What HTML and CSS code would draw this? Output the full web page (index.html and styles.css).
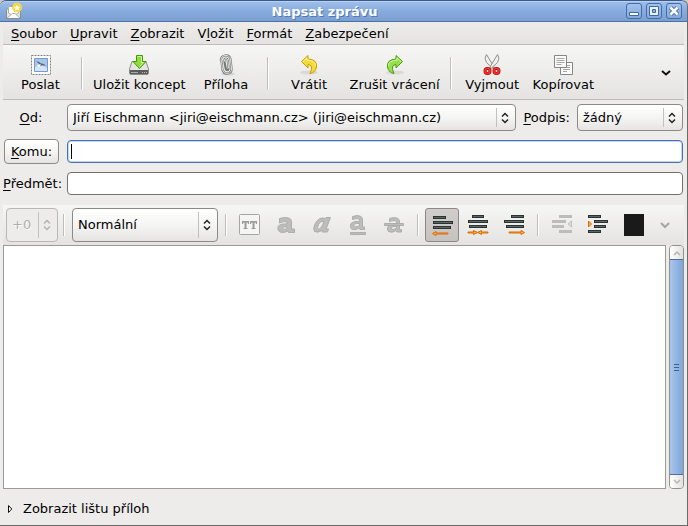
FILE: index.html
```html
<!DOCTYPE html>
<html lang="cs">
<head>
<meta charset="utf-8">
<title>Napsat zprávu</title>
<link rel="stylesheet" href="styles.css">
</head>
<body>
<div class="window">
  <header class="titlebar">
    <svg class="app-icon" width="18" height="18" viewBox="0 0 18 18" aria-hidden="true">
      <path d="M1.500 7.500 L9 2.500 L15.500 7.500 V16.500 H1.500 Z" fill="#e6e6e2" stroke="#8d8d87"/>
      <path d="M3.500 4.500 H13.500 V11 L8.500 14 L3.500 11 Z" fill="#fff" stroke="#b0b0aa"/>
      <path d="M2 16 L7.500 11.500 H10 L15 16" fill="#f8f8f6" stroke="#b5b5af"/>
      <circle cx="12" cy="5.500" r="5" fill="#f6e04a" opacity=".9"/>
      <path d="M12 1.500 L13.300 4.200 L16.300 4.500 L14.100 6.500 L14.800 9.500 L12 8 L9.200 9.500 L9.900 6.500 L7.700 4.500 L10.700 4.200 Z" fill="#fffef0" stroke="#e5c800" stroke-width=".6"/>
    </svg>
    <h1 class="title">Napsat zprávu</h1>
    <div class="window-controls">
      <button class="window-button" type="button" aria-label="Minimalizovat"><svg width="14" height="14" viewBox="0 0 14 14"><path d="M2.500 8.500 H11.500 V11.500 H2.500 Z" fill="#fff" stroke="#3f6ba5"/></svg></button>
      <button class="window-button" type="button" aria-label="Maximalizovat"><svg width="14" height="14" viewBox="0 0 14 14"><path d="M2.500 2.500 H11.500 V11.500 H2.500 Z" fill="#e9f1fb" stroke="#3f6ba5"/><path d="M5.500 5.500 H8.500 V8.500 H5.500 Z" fill="#8fb1df" stroke="#3f6ba5"/></svg></button>
      <button class="window-button" type="button" aria-label="Zavřít"><svg width="14" height="14" viewBox="0 0 14 14"><path d="M3.500 3.500 L10.500 10.500 M10.500 3.500 L3.500 10.500" stroke="#3f6ba5" stroke-width="4.500"/><path d="M3.500 3.500 L10.500 10.500 M10.500 3.500 L3.500 10.500" stroke="#fff" stroke-width="2.500"/></svg></button>
    </div>
  </header>

  <nav class="menubar" aria-label="Hlavní nabídka">
    <button type="button"><u>S</u>oubor</button>
    <button type="button"><u>U</u>pravit</button>
    <button type="button"><u>Z</u>obrazit</button>
    <button type="button">V<u>l</u>ožit</button>
    <button type="button"><u>F</u>ormát</button>
    <button type="button"><u>Z</u>abezpečení</button>
  </nav>

  <div class="toolbar" role="toolbar" aria-label="Zpráva">
    <button class="tool" type="button">
      <svg width="24" height="24" viewBox="0 0 24 24" aria-hidden="true">
        <path d="M2.500 2.500 H21.500 V21.500 H2.500 Z" fill="#fafaf8" stroke="#85857f" stroke-dasharray="2 1"/>
        <path d="M5.500 5.500 H18.500 V18.500 H5.500 Z" fill="#a9c6e8" stroke="#6f9bd0"/>
        <path d="M6 14 Q12 11 18 15 V18 H6 Z" fill="#d5e5f5"/>
        <path d="M7 8.500 Q10 8 12 10.500 Q14 10 17 12.500 Q13 12 11 12.500 Q10 10 7 8.500 Z" fill="#54636e"/>
        <path d="M8 12 L12 11 L10 14 Z" fill="#fff"/>
      </svg>
      <span>Poslat</span>
    </button>
    <span class="separator"></span>
    <button class="tool" type="button">
      <svg width="24" height="24" viewBox="0 0 24 24" aria-hidden="true">
        <path d="M5 8.500 H19 L21.500 16 V20 Q21.500 21.500 20 21.500 H4 Q2.500 21.500 2.500 20 V16 Z" fill="#e4e4e0" stroke="#8c8c88"/>
        <path d="M3 17 H21 V21 H3 Z" fill="#5a5d5c"/>
        <path d="M4 19.500 H11" stroke="#a9aba8"/><path d="M15 19.500 H20" stroke="#b9bbb8" stroke-dasharray="1 1"/>
        <path d="M9.500 2.500 H15.500 V8.500 H19 L12.500 15.500 L6 8.500 H9.500 Z" fill="#8fdc3c" stroke="#3f9a08"/>
        <path d="M10.500 3.500 H14.500 V9.500 H16.500 L12.500 13.700" fill="none" stroke="#d1f3a6"/>
      </svg>
      <span>Uložit koncept</span>
    </button>
    <button class="tool" type="button">
      <svg width="24" height="24" viewBox="0 0 24 24" aria-hidden="true">
        <ellipse cx="14" cy="21" rx="7" ry="1.500" fill="#d2d2cf"/>
        <g fill="none" stroke-linecap="round">
          <path d="M7.500 8 L8.500 17 Q10 21 13.500 20.500 Q18 20 17.500 15 L16.500 6 Q15.500 2 11 2.500 Q6.500 3 7 8 M10.500 8 Q10 5.500 12 5.500 Q13.500 5.500 13.800 8 L14.500 15 Q14.500 17.500 13 17 Q12 17 11.500 14.500 L10.500 9" stroke="#777a74" stroke-width="2.200"/>
          <path d="M7.500 8 L8.500 17 Q10 21 13.500 20.500 Q18 20 17.500 15 L16.500 6 Q15.500 2 11 2.500 Q6.500 3 7 8 M10.500 8 Q10 5.500 12 5.500 Q13.500 5.500 13.800 8 L14.500 15" stroke="#dcdeda"/>
        </g>
      </svg>
      <span>Příloha</span>
    </button>
    <span class="separator"></span>
    <button class="tool" type="button">
      <svg width="24" height="24" viewBox="0 0 24 24" aria-hidden="true">
        <ellipse cx="12" cy="19.500" rx="9" ry="2" fill="#d9d9d6"/>
        <path d="M4.500 8.500 L11 2.500 V6 Q20.500 6.500 19.500 14 Q18.500 19.500 13 20.500 Q17 12 11 11.500 V15 Z" fill="#f6d936" stroke="#c4a000" stroke-linejoin="round"/>
        <path d="M6 8.500 L10 4.800 V7 Q18.500 7.500 18.500 13" fill="none" stroke="#fff3a6"/>
      </svg>
      <span>Vrátit</span>
    </button>
    <button class="tool" type="button">
      <svg width="24" height="24" viewBox="0 0 24 24" aria-hidden="true">
        <ellipse cx="12" cy="19.500" rx="9" ry="2" fill="#d9d9d6"/>
        <path d="M19.500 8.500 L13 2.500 V6 Q3.500 6.500 4.500 14 Q5.500 19.500 11 20.500 Q7 12 13 11.500 V15 Z" fill="#93e04a" stroke="#4a9a12" stroke-linejoin="round"/>
        <path d="M18 8.500 L14 4.800 V7 Q5.500 7.500 5.500 13" fill="none" stroke="#d4f5aa"/>
      </svg>
      <span>Zrušit vrácení</span>
    </button>
    <span class="separator"></span>
    <button class="tool" type="button">
      <svg width="24" height="24" viewBox="0 0 24 24" aria-hidden="true">
        <path d="M6.500 1.500 Q3.500 5 6.500 9.500 L13 15.500 L14 14 Z" fill="#f1f1ef" stroke="#8f918c"/>
        <path d="M17.500 1.500 Q20.500 5 17.500 9.500 L11 15.500 L10 14 Z" fill="#f1f1ef" stroke="#8f918c"/>
        <g fill="#f5eeee" stroke="#b80808" stroke-width="3"><circle cx="7.500" cy="18" r="2.500"/><circle cx="16.500" cy="18" r="2.500"/></g>
        <g fill="none" stroke="#ef3434" stroke-width="1.500"><circle cx="7.500" cy="18" r="2.500"/><circle cx="16.500" cy="18" r="2.500"/></g>
      </svg>
      <span>Vyjmout</span>
    </button>
    <button class="tool" type="button">
      <svg width="24" height="24" viewBox="0 0 24 24" aria-hidden="true">
        <path d="M9.500 9.500 H21.500 V21.500 H9.500 Z" fill="#fafaf9" stroke="#858783"/>
        <path d="M12 12.500 H19 M12 14.500 H19 M12 16.500 H19 M12 18.500 H16" stroke="#a6a8a4"/>
        <path d="M3.500 2.500 H15.500 V14.500 H3.500 Z" fill="#fafaf9" stroke="#858783"/>
        <path d="M5.500 5.500 H13.500 M5.500 7.500 H13.500 M5.500 9.500 H13.500 M5.500 11.500 H10.500" stroke="#a6a8a4"/>
      </svg>
      <span>Kopírovat</span>
    </button>
    <button class="overflow" type="button" aria-label="Další nástroje"><svg width="12" height="8" viewBox="0 0 12 8"><path d="M2 2 L6 5.500 L10 2" fill="none" stroke="#111" stroke-width="2"/></svg></button>
  </div>

  <form class="fields">
    <label class="field-label centered" for="from"><u>O</u>d:</label>
    <div class="from-row">
      <div class="combo grow">
        <select id="from"><option>Jiří Eischmann &lt;jiri@eischmann.cz&gt; (jiri@eischmann.cz)</option></select>
        <svg class="arrows" width="10" height="12" viewBox="0 0 10 12" aria-hidden="true"><path d="M2 4.500 L5 1.500 L8 4.500 M2 7.500 L5 10.500 L8 7.500"/></svg>
      </div>
      <label for="signature"><u>P</u>odpis:</label>
      <div class="combo signature">
        <select id="signature"><option>žádný</option></select>
        <svg class="arrows" width="10" height="12" viewBox="0 0 10 12" aria-hidden="true"><path d="M2 4.500 L5 1.500 L8 4.500 M2 7.500 L5 10.500 L8 7.500"/></svg>
      </div>
    </div>
    <button class="to-button" type="button" id="to-label"><u>K</u>omu:</button>
    <div class="active-entry">
      <input class="entry active" type="text" aria-labelledby="to-label">
      <span class="caret"></span>
    </div>
    <label class="field-label" for="subject"><u>P</u>ředmět:</label>
    <input class="entry" type="text" id="subject">
  </form>

  <div class="formatbar" role="toolbar" aria-label="Formátování">
    <div class="combo tall size">
      <select aria-label="Velikost písma" disabled><option>+0</option></select>
      <svg class="arrows" width="10" height="12" viewBox="0 0 10 12" aria-hidden="true"><path d="M2 4.500 L5 1.500 L8 4.500 M2 7.500 L5 10.500 L8 7.500"/></svg>
    </div>
    <span class="separator"></span>
    <div class="combo tall style">
      <select aria-label="Styl odstavce"><option>Normální</option></select>
      <svg class="arrows" width="10" height="12" viewBox="0 0 10 12" aria-hidden="true"><path d="M2 4.500 L5 1.500 L8 4.500 M2 7.500 L5 10.500 L8 7.500"/></svg>
    </div>
    <span class="separator"></span>
    <button class="format" type="button" aria-label="Neproporcionální" disabled><svg width="24" height="24" viewBox="0 0 24 24"><rect x="1.500" y="1.500" width="20" height="20" rx="1" fill="#f5f5f4" stroke="#a5a5a2"/><path d="M4 8 H11 V11 H10 L9.500 9.500 H8.500 V15 H9.500 V16 H5.500 V15 H6.500 V9.500 H5.500 L5 11 H4 Z M12 8 H19 V11 H18 L17.500 9.500 H16.500 V15 H17.500 V16 H13.500 V15 H14.500 V9.500 H13.500 L13 11 H12 Z" fill="#9b9b98"/></svg></button>
    <button class="format" type="button" aria-label="Tučné" disabled><svg class="glyph" width="24" height="24" viewBox="0 0 24 24"><path d="M5.500 5.500 Q12 3.500 16 5.500 Q17.500 7 17.500 9 V16 H20.500 V19.500 H14.500 L13.500 18 Q10 20.500 6 19 Q3 17 4 13.500 Q6 10.500 13 11 V9.500 Q11 7.500 5.500 10 Z M13 13.500 Q8.500 13.500 8.500 15.500 Q9.500 17.500 13 15.500 Z"/></svg></button>
    <button class="format" type="button" aria-label="Kurzíva" disabled><svg class="glyph" width="24" height="24" viewBox="0 0 24 24"><path d="M20.500 4.500 L16 16 H18.500 L17.500 19 H12 L12.500 17 Q8 20.500 4.500 18.500 Q2.500 15 5.500 10 Q9.500 3.500 15 5.500 L16 4.500 Z M14 8 Q10.500 7.500 8.500 11.500 Q6.500 15.500 8.500 16.500 Q11.500 16 14 8 Z"/></svg></button>
    <button class="format" type="button" aria-label="Podtržené" disabled><svg class="glyph" width="24" height="24" viewBox="0 0 24 24"><path d="M6.500 3.500 Q12 1.500 15 3.500 Q16.500 4.500 16.500 7 V14 H18.500 V16.500 H14 L13 15 Q9 18 5.500 16 Q3.500 13.500 5 10.500 Q8 7.500 13.500 8.500 V7 Q12.500 4.500 6.500 6.500 Z M13.500 10.500 Q8 10 8 12.500 Q9 15 13.500 12.500 Z M4.500 19.500 H19.500 V21.500 H4.500 Z"/></svg></button>
    <button class="format" type="button" aria-label="Přeškrtnuté" disabled><svg class="glyph" width="24" height="24" viewBox="0 0 24 24"><path d="M7.500 5.500 Q13 3.500 16 5.500 Q17.500 6.500 17.500 9 V16.500 H19.500 V19 H15 L14 17.500 Q10 20.500 6.500 18.500 Q4.500 16.500 6 13.500 Q9 10.500 14.500 11 V9 Q13.500 6.500 7.500 8.500 Z M14.500 13.500 Q9 13 9 15.500 Q10 17.500 14.500 15.500 Z"/><path d="M2.500 10.500 H21.500 V12.500 H2.500 Z"/></svg></button>
    <span class="separator"></span>
    <button class="format pressed" type="button" aria-label="Zarovnat vlevo" aria-pressed="true"><svg width="24" height="24" viewBox="0 0 24 24"><path class="lines" d="M3 4.500 H16 M3 9.500 H23 M3 14.500 H21"/><path class="core" d="M4 4.500 H15 M4 9.500 H22 M4 14.500 H20"/><path class="arrow" d="M2.500 20.500 L6 18.500 V20 H18 V21 H6 V22.500 Z"/></svg></button>
    <button class="format" type="button" aria-label="Zarovnat na střed"><svg width="24" height="24" viewBox="0 0 24 24"><path class="lines" d="M6 3.500 H18 M2 8.500 H22 M3 13.500 H21"/><path class="core" d="M7 3.500 H17 M3 8.500 H21 M4 13.500 H20"/><path class="arrow" d="M2 19 H7.500 V17.500 L11.500 19.500 L15.500 17.500 V19 H22 V20 H15.500 V21.500 L11.500 19.500 L7.500 21.500 V20 H2 Z"/></svg></button>
    <button class="format" type="button" aria-label="Zarovnat vpravo"><svg width="24" height="24" viewBox="0 0 24 24"><path class="lines" d="M9 3.500 H22 M2 8.500 H22 M4 13.500 H22"/><path class="core" d="M10 3.500 H21 M3 8.500 H21 M5 13.500 H21"/><path class="arrow" d="M22.500 19.500 L19 17.500 V19 H7 V20 H19 V21.500 Z"/></svg></button>
    <span class="separator"></span>
    <button class="format" type="button" aria-label="Zmenšit odsazení" disabled><svg width="24" height="24" viewBox="0 0 24 24"><path class="lines faded" d="M9 3.500 H22 M2 8.500 H16 M2 13.500 H14 M9 18.500 H22"/><path d="M21.500 8 V14 L18 11 Z" fill="#e3e3e0" stroke="#bdbdba"/></svg></button>
    <button class="format" type="button" aria-label="Zvětšit odsazení"><svg width="24" height="24" viewBox="0 0 24 24"><path class="lines" d="M2 3.500 H15 M8 8.500 H22 M8 13.500 H20 M2 18.500 H15"/><path class="core" d="M3 3.500 H14 M9 8.500 H21 M9 13.500 H19 M3 18.500 H14"/><path class="arrow" d="M2.500 8 V14 L5.500 11 Z"/></svg></button>
    <button class="format" type="button" aria-label="Barva písma"><span class="swatch"></span></button>
    <button class="overflow dim" type="button" aria-label="Paleta barev"><svg width="12" height="8" viewBox="0 0 12 8"><path d="M2 2 L6 6 L10 2" fill="none" stroke="#a5a5a2" stroke-width="2"/></svg></button>
  </div>

  <main class="editor">
    <textarea class="message" aria-label="Text zprávy"></textarea>
    <div class="scrollbar">
      <button class="scroll-step" type="button" aria-label="Nahoru"><svg width="10" height="6" viewBox="0 0 10 6"><path d="M2 5 L5 2 L8 5"/></svg></button>
      <div class="thumb"><span></span><span></span><span></span></div>
      <button class="scroll-step" type="button" aria-label="Dolů"><svg width="10" height="6" viewBox="0 0 10 6"><path d="M2 1 L5 4 L8 1"/></svg></button>
    </div>
  </main>

  <footer class="attachments">
    <button type="button"><svg width="6" height="8" viewBox="0 0 6 8" aria-hidden="true"><path d="M1.500 .5 V7.500 L4.800 4 Z" fill="#fff" stroke="#111"/></svg>Zobrazit lištu příloh</button>
  </footer>
</div>
</body>
</html>
```

FILE: styles.css
```css
* { box-sizing: border-box; }

body {
  margin: 0;
  background: #ccc8c0;
  color: #000;
  font: 13px/16px "DejaVu Sans", sans-serif;
}

button, input, select, textarea { font: inherit; color: inherit; margin: 0; }
button { border: 0; background: none; padding: 0; white-space: nowrap; }
svg { display: block; flex: none; }
u { text-decoration-thickness: 1px; text-underline-offset: 2px; }

.window {
  display: flex;
  flex-direction: column;
  min-height: 100vh;
  padding: 0 3px;
  background: #edeceb;
  border-right: 1px solid #6b6b69;
  border-bottom: 1px solid #6b6b69;
  border-radius: 6px 6px 0 0;
}

/* Title bar */
.titlebar {
  display: flex;
  align-items: center;
  height: 22px;
  margin: 0 -3px;
  padding: 0 5px;
  background: linear-gradient(#a1c0eb, #86abdd 50%, #7a9fd0);
  border-top: 1px solid #3c5a85;
  border-bottom: 1px solid #4a72a9;
  border-radius: 6px 6px 0 0;
  box-shadow: inset 0 1px #b8d0f2;
}
.title {
  flex: 1;
  margin: 0;
  padding-top: 1px;
  color: #fff;
  font-size: 13px;
  font-weight: bold;
  text-align: center;
  text-shadow: 1px 1px #5079b2;
}
.window-controls { display: flex; gap: 4px; }
.window-button {
  display: grid;
  place-items: center;
  width: 16px;
  height: 16px;
  border: 1px solid #416da8;
  border-radius: 3px;
  background: linear-gradient(#a3c1ea, #85a9da);
}
.window-button svg { fill: none; }

/* Menu bar */
.menubar {
  display: flex;
  gap: 13px;
  height: 23px;
  padding: 2px 8px 0;
  background: linear-gradient(#edeceb, #e4e3e1);
  border-bottom: 1px solid #bdbcba;
}

/* Toolbars */
.toolbar {
  display: flex;
  height: 55px;
  padding: 8px 12px 6px 2px;
  background: linear-gradient(#f6f6f5, #e4e3e1);
  border-bottom: 1px solid #bdbcba;
}
.tool {
  display: flex;
  flex-direction: column;
  align-items: center;
  min-width: 71px;
  padding: 0 5px;
}
.separator { display: flex; width: 12px; padding: 4px 0; justify-content: center; }
.separator::before {
  content: "";
  width: 2px;
  background: linear-gradient(to right, #bebdbb 50%, #fff 50%);
}
.overflow { display: grid; place-items: center; width: 20px; margin-left: auto; }
.toolbar .overflow { width: 12px; }

/* Address fields */
.fields {
  display: grid;
  grid-template-columns: 56px 1fr;
  align-items: center;
  gap: 8px;
  padding: 4px 1px 10px 0;
}
.field-label { white-space: nowrap; }
.centered { text-align: center; }
.from-row { display: flex; align-items: center; gap: 7px; }
.grow { flex: 1; }
.signature { width: 106px; }

.combo { position: relative; display: flex; }
.combo select {
  appearance: none;
  width: 100%;
  height: 27px;
  padding: 0 26px 0 5px;
  border: 1px solid #8b8a87;
  border-radius: 4px;
  background: linear-gradient(#fff, #f5f5f4 50%, #e5e4e2);
  opacity: 1;
}
.combo::after {
  content: "";
  position: absolute;
  top: 4px;
  bottom: 4px;
  right: 19px;
  width: 1px;
  background: #c2c1be;
}
.arrows {
  position: absolute;
  top: 50%;
  right: 6px;
  margin-top: -6px;
  fill: none;
  stroke: #222;
  stroke-width: 1.5;
  pointer-events: none;
}
.combo.tall select { height: 34px; }

.to-button {
  justify-self: start;
  width: 55px;
  height: 25px;
  margin-left: 1px;
  border: 1px solid #8b8a87;
  border-radius: 4px;
  background: linear-gradient(#fff, #f5f5f4 50%, #e5e4e2);
}
.entry {
  display: block;
  width: 100%;
  height: 23px;
  padding: 0 4px;
  border: 1px solid #72716e;
  border-radius: 4px;
  background: #fff;
  outline: none;
}
.entry.active { border-color: #4a72a9; box-shadow: inset 0 0 0 1px #c4d6ef; caret-color: transparent; }
.active-entry { position: relative; }
.caret { position: absolute; top: 4px; left: 4px; width: 1px; height: 15px; background: #000; }

/* Formatting bar */
.formatbar {
  display: flex;
  align-items: center;
  height: 40px;
  padding: 0 9px 0 3px;
  background: linear-gradient(#f6f6f5, #e4e3e1);
}
.formatbar .separator { height: 30px; }
.size { width: 52px; }
.size select { color: #b0afac; border-color: #b9b8b5; background: #edeceb; text-shadow: 1px 1px #fff; }
.size .arrows { stroke: #b5b4b1; }
.style { width: 146px; margin: 0 2px; }
.format {
  display: grid;
  place-items: center;
  width: 36px;
  height: 34px;
}
.pressed {
  width: 34px;
  margin: 0 1px;
  border: 1px solid #8a8986;
  border-radius: 3px;
  background: linear-gradient(#d0cdcb, #c5c2c0);
}
.glyph { fill: #bdbdba; fill-rule: evenodd; stroke: #adadaa; }
.lines { fill: none; stroke: #2a3232; stroke-width: 3; }
.core { fill: none; stroke: #5c6664; stroke-width: 1; }
.lines.faded { stroke: #bcbcb9; }
.arrow { fill: #fcb040; stroke: #dd6a00; stroke-width: 1; }
.swatch { width: 20px; height: 22px; background: #1a1a1a; }

/* Message editor */
.editor { display: flex; flex: 1; gap: 3px; }
.message {
  flex: 1;
  padding: 4px;
  border: 1px solid #9b9a97;
  border-radius: 0;
  background: #fff;
  resize: none;
  outline: none;
}
.scrollbar {
  display: flex;
  flex-direction: column;
  width: 15px;
  border: 1px solid #92918e;
  border-radius: 4px;
  overflow: hidden;
}
.scroll-step {
  display: grid;
  place-items: center;
  height: 13px;
  background: linear-gradient(to right, #fff, #e2e1df);
}
.scroll-step path { fill: none; stroke: #b5b4b1; stroke-width: 1.5; }
.thumb {
  display: flex;
  flex: 1;
  flex-direction: column;
  align-items: center;
  justify-content: center;
  gap: 2px;
  border: solid #4a6f9f;
  border-width: 1px 0;
  background: linear-gradient(to right, #a9c5ea, #7fa5d9);
}
.thumb span { width: 5px; height: 1px; background: #3f618f; }

/* Attachment bar */
.attachments { display: flex; align-items: center; height: 36px; padding: 3px 4px 0; }
.attachments button { display: flex; align-items: center; gap: 10px; }
```
